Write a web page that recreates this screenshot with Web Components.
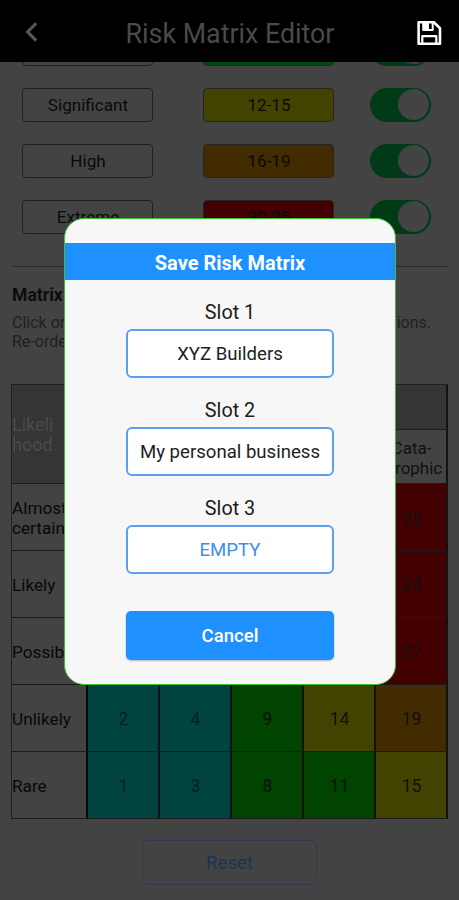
<!DOCTYPE html>
<html lang="en">
<head>
<meta charset="utf-8">
<title>Risk Matrix Editor</title>
<style>
html,body{margin:0;height:100%;overflow:hidden;background:#434343;font-family:Roboto,"Liberation Sans",sans-serif}
</style>
</head>
<body>
<risk-app></risk-app>
<script>
const define = (name, html, setup) => {
  const t = document.createElement('template');
  t.innerHTML = html;
  customElements.define(name, class extends HTMLElement {
    constructor() {
      super();
      this.attachShadow({mode: 'open'}).append(t.content.cloneNode(true));
    }
    connectedCallback() { if (setup) setup(this, this.shadowRoot); }
  });
};

define('app-bar', `<style>
:host{display:flex;align-items:center;justify-content:space-between;height:62px;box-sizing:border-box;padding:6px 16px 0 24px;background:#000;color:#4a4a4a;position:relative;z-index:1}
h1{margin:0 0 0 5px;font-size:26.8px;font-weight:400;line-height:30px}
svg{display:block}
.back{margin-top:-5px}
.save{margin-top:-3px}
</style>
<svg class="back" width="16" height="22" viewBox="0 0 16 22" fill="none" stroke="#585858" stroke-width="3"><path d="M12.2 2.2 3.6 10.9 12.2 19.6"/></svg>
<h1><slot></slot></h1>
<svg class="save" width="28" height="28" viewBox="0 0 28 28" fill="none" stroke="#fff" stroke-width="2.6" stroke-linejoin="round"><path d="M3.6 3.2H18.8L25 9.2V24.8H3.6Z"/><path d="M7.3 24V17.2H21.3V24" stroke-width="2.2"/><path d="M8.2 4V11H17.7V4" stroke-width="2"/><path d="M9 4h5v7H9Z" fill="#fff" stroke="none"/></svg>`);

define('risk-switch', `<style>
:host{display:flex;justify-content:flex-end;align-items:center;width:61px;height:34.5px;border-radius:18px;background:#003a17;box-sizing:border-box;padding-right:2px}
i{width:31px;height:31px;border-radius:50%;background:#434343}
</style><i></i>`);

define('risk-level', `<style>
:host{display:grid;grid-template-columns:131px 131px 61px;column-gap:50px;height:34px}
risk-switch{margin-left:-14.5px}
.box{box-sizing:border-box;border:1px solid #202020;border-radius:4px;display:flex;align-items:center;justify-content:center;font-size:17.1px;line-height:20px;color:#0a0a0a;padding-left:1px}
.range{background:var(--level);border-color:#252525}
</style><div class="box"><slot></slot></div><div class="box range"><slot name="range"></slot></div><risk-switch></risk-switch>`);

define('matrix-cell', `<style>
:host{display:flex;align-items:center;justify-content:center;box-sizing:border-box;border-right:2px solid #121212;border-bottom:1.5px solid #1b1b1b;font-size:17.5px;line-height:20px;color:#101010;background:var(--cell,#434343);white-space:pre-line;text-align:center;padding:2px 0 0 1px}
:host([label]){justify-content:flex-start;text-align:left;overflow:hidden;font-size:17.2px;color:#080808;border-right-color:#080808;padding-left:0}
:host([head]){background:#353535;color:#4b4b4b}
</style><slot></slot>`);

define('risk-matrix', `<style>
:host{display:grid;grid-template-columns:76px repeat(4,72px) 72px;grid-template-rows:45px 54px repeat(5,67px);border:1px solid #202020;border-right:0;border-bottom:0;box-sizing:border-box;width:437px;height:435px}
.corner{grid-row:span 2;font-size:18px}.top{grid-column:span 5}
</style>
<matrix-cell class="corner" head label>Likeli
hood</matrix-cell><matrix-cell class="top" head></matrix-cell>`, (h, r) => {
  if (r.querySelectorAll('matrix-cell').length > 2) return;
  const c = {t:'#004341', g:'#004400', y:'#434300', o:'#432b00', r:'#430000'};
  const add = (text, key, label) => {
    const e = document.createElement('matrix-cell');
    e.textContent = text;
    if (key) e.style.setProperty('--cell', c[key]);
    if (label) e.toggleAttribute('label', true);
    if (key === 't') e.style.color = '#00201f';
    if (text === 'Cata-\nstrophic') e.style.fontSize = '17px';
    r.append(e);
  };
  ['', '', '', '', 'Cata-\nstrophic'].forEach(s => add(s));
  [['Almost\ncertain', ' ', 'g', ' ', 'y', ' ', 'o', ' ', 'r', '25', 'r'],
   ['Likely', ' ', 'g', ' ', 'g', ' ', 'y', ' ', 'o', '24', 'r'],
   ['Possible', ' ', 't', ' ', 'g', ' ', 'y', ' ', 'o', '22', 'r'],
   ['Unlikely', '2', 't', '4', 't', '9', 'g', '14', 'y', '19', 'o'],
   ['Rare', '1', 't', '3', 't', '8', 'g', '11', 'g', '15', 'y']].forEach(row => {
    add(row[0], null, true);
    for (let i = 1; i < row.length; i += 2) add(row[i].trim(), row[i + 1]);
  });
});

define('save-slot', `<style>
:host{display:flex;flex-direction:column;align-items:center}
.name{font-size:19.8px;line-height:24px;color:#1c1c1c;margin-bottom:4px;padding-top:1px}
button{font:18.6px/22px Roboto,sans-serif;width:208.5px;height:49px;box-sizing:border-box;border:2px solid #5ba0f0;border-radius:6px;background:#fff;color:#1e1e1e;padding:1px 0 0;white-space:nowrap}
:host([empty]) button{color:#3f8ee6}
</style><div class="name"><slot name="name"></slot></div><button><slot></slot></button>`);

define('save-dialog', `<style>
:host{display:flex;flex-direction:column;align-items:center;box-sizing:border-box;width:332px;height:467px;border:1.5px solid #39c22c;border-radius:20px;background:#f7f7f7;overflow:hidden}
h2{margin:24px 0 20px;width:100%;height:37px;background:#1e90ff;color:#fff;font-size:20px;line-height:40px;font-weight:700;text-align:center}
save-slot{margin-bottom:20px}
.cancel{font:500 18.6px/22px Roboto,sans-serif;margin-top:16.5px;width:208.5px;height:49px;border:0;border-radius:5px;background:#1e90ff;color:#fff;padding:2px 0 0;box-shadow:0 1px 2px #0004}
</style><h2>Save Risk Matrix</h2>
<save-slot><span slot="name">Slot 1</span>XYZ Builders</save-slot>
<save-slot><span slot="name">Slot 2</span>My personal business</save-slot>
<save-slot empty><span slot="name">Slot 3</span>EMPTY</save-slot>
<button class="cancel">Cancel</button>`);

define('risk-app', `<style>
:host{display:block;position:relative;width:459px;height:900px;overflow:hidden}
.levels{display:grid;row-gap:22px;margin:-30.5px 0 0 22px}
hr{border:0;height:1.5px;background:#2a2a2a;margin:32px 11px 0 12px}
h3{margin:18px 0 0 12px;font-size:17.6px;line-height:20px;font-weight:700;color:#0c0c0c}
.hint{margin:8px 28px 0 12px;font-size:16px;line-height:19px;color:#202020}
.hint div{display:flex;justify-content:space-between}
risk-matrix{margin:33px 0 0 11px}
.reset{display:block;margin:20.5px auto 0;width:175px;height:45px;box-sizing:border-box;border:1.5px solid #2c3950;border-radius:6px;background:none;color:#193457;font:18.6px/22px Roboto,sans-serif;padding:2px 0 0}
save-dialog{position:absolute;left:64px;top:218px;z-index:2}
</style>
<app-bar>Risk Matrix Editor</app-bar>
<div class="levels">
<risk-level style="--level:#004716"></risk-level>
<risk-level style="--level:#434300">Significant<span slot="range">12-15</span></risk-level>
<risk-level style="--level:#432b00">High<span slot="range">16-19</span></risk-level>
<risk-level style="--level:#430000">Extreme<span slot="range">20-25</span></risk-level>
</div>
<hr><h3>Matrix</h3>
<div class="hint"><div><span>Click on</span><span>tions.</span></div><div>Re-order</div></div>
<risk-matrix></risk-matrix>
<button class="reset">Reset</button>
<save-dialog></save-dialog>`);
</script>
</body>
</html>
